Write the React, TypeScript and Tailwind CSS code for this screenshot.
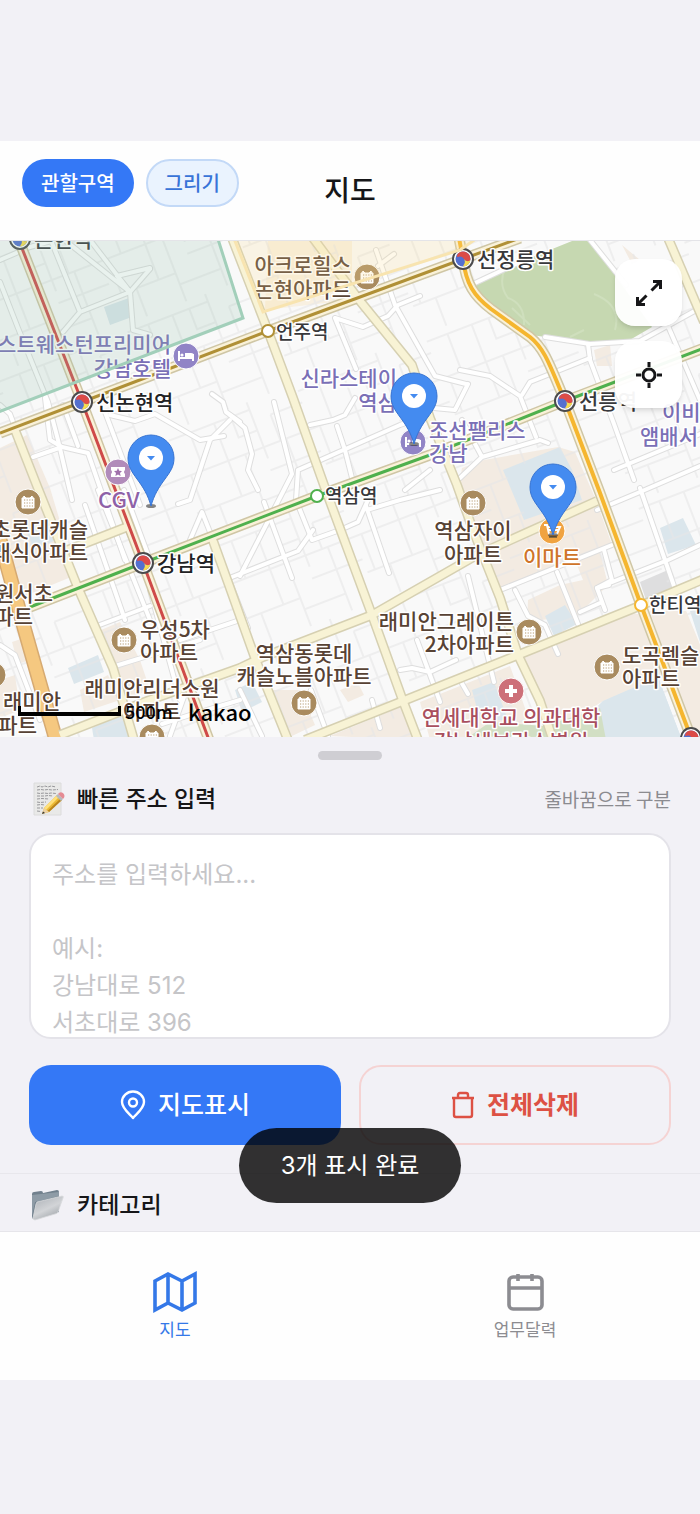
import React from "react";

type Point = [number, number];

const BROWN = "#574234";
const INK = "#38383b";
const PURPLE = "#7a6fb6";
const RED = "#a94f5e";

interface MapLabel {
  text: string;
  x: number;
  y: number;
  color: string;
  size?: number;
  anchor?: "start" | "middle" | "end";
}

const labels: MapLabel[] = [
  { text: "논현역", x: 34, y: 247, color: INK },
  { text: "아크로힐스", x: 351, y: 273, color: BROWN, anchor: "end" },
  { text: "논현아파트", x: 351, y: 297, color: BROWN, anchor: "end" },
  { text: "선정릉역", x: 477, y: 267, color: INK },
  { text: "언주역", x: 276, y: 339, color: INK, size: 19 },
  { text: "스트웨스턴프리미어", x: 171, y: 352, color: PURPLE, anchor: "end" },
  { text: "강남호텔", x: 171, y: 376, color: PURPLE, anchor: "end" },
  { text: "신논현역", x: 96, y: 410, color: "#222224" },
  { text: "신라스테이", x: 397, y: 386, color: PURPLE, anchor: "end" },
  { text: "역삼", x: 397, y: 410, color: PURPLE, anchor: "end" },
  { text: "조선팰리스", x: 429, y: 438, color: PURPLE },
  { text: "강남", x: 429, y: 461, color: PURPLE },
  { text: "선릉역", x: 579, y: 409, color: INK },
  { text: "이비", x: 662, y: 420, color: PURPLE },
  { text: "앰배서", x: 640, y: 444, color: PURPLE },
  { text: "CGV", x: 98, y: 508, color: "#8e62a8", size: 22 },
  { text: "역삼역", x: 325, y: 503, color: INK, size: 19 },
  { text: "역삼자이", x: 473, y: 538, color: BROWN, anchor: "middle" },
  { text: "아파트", x: 473, y: 562, color: BROWN, anchor: "middle" },
  { text: "이마트", x: 552, y: 565, color: "#cf7429", anchor: "middle" },
  { text: "초롯데캐슬", x: 88, y: 537, color: BROWN, anchor: "end" },
  { text: "래식아파트", x: 88, y: 560, color: BROWN, anchor: "end" },
  { text: "강남역", x: 157, y: 571, color: "#222224" },
  { text: "원서초", x: 53, y: 601, color: BROWN, anchor: "end" },
  { text: "파트", x: 33, y: 624, color: BROWN, anchor: "end" },
  { text: "우성5차", x: 140, y: 637, color: BROWN },
  { text: "아파트", x: 140, y: 660, color: BROWN },
  { text: "래미안리더스원", x: 152, y: 696, color: BROWN, anchor: "middle" },
  { text: "아파트", x: 152, y: 719, color: BROWN, anchor: "middle" },
  { text: "래미안", x: 61, y: 709, color: BROWN, anchor: "end" },
  { text: "파트", x: 37, y: 733, color: BROWN, anchor: "end" },
  { text: "역삼동롯데", x: 304, y: 661, color: BROWN, anchor: "middle" },
  { text: "캐슬노블아파트", x: 304, y: 684, color: BROWN, anchor: "middle" },
  { text: "래미안그레이튼", x: 514, y: 629, color: BROWN, anchor: "end" },
  { text: "2차아파트", x: 514, y: 652, color: BROWN, anchor: "end" },
  { text: "한티역", x: 649, y: 612, color: INK, size: 19 },
  { text: "도곡렉슬", x: 622, y: 663, color: BROWN },
  { text: "아파트", x: 622, y: 686, color: BROWN },
  { text: "연세대학교 의과대학", x: 511, y: 725, color: RED, anchor: "middle" },
  { text: "강남세브란스병원", x: 511, y: 749, color: RED, anchor: "middle" },
];

const lanes: string[] = [
  "M0 260 L30 247 L62 238 M0 282 L18 328 L48 402 L58 440 L72 500",
  "M50 238 L80 312 L63 332 M62 238 L130 292 L117 276 L150 268 M130 292 L80 312",
  "M90 240 L130 292 L133 330 L150 335 M130 292 L150 269",
  "M0 405 L10 414 L16 430 M45 398 L50 440 L62 447 L88 453 L125 560",
  "M33 457 L62 447 M63 405 L78 446 M110 415 L135 421 L155 414 L200 440 L224 436",
  "M105 412 L140 505 M212 394 L223 402 L226 412 L240 422",
  "M335 318 L363 327 L388 316 L398 305 L420 296 M376 250 L395 305 L435 376 L466 384 M335 318 L356 369",
  "M378 266 L394 254 M274 402 L292 474 L240 576 M310 425 L333 420 L345 415 L355 398",
  "M337 426 L345 450 L352 478 M298 470 L400 425 L414 420 M298 470 L296 500 L312 540 L340 530 L358 522 L368 500",
  "M313 530 L298 551 L232 577 M264 502 L292 578 M230 415 L245 428 L252 454 L248 470 L258 490",
  "M434 408 L455 410 L468 384 M462 420 L474 442 L482 457 L460 478 M482 457 L540 440 L548 443",
  "M460 370 L490 376 L520 396 L536 437 M522 395 L530 382 L590 358 M545 337 L590 344 L640 341 L700 308",
  "M588 344 L590 360 L614 424 L634 480 M590 240 L626 285 M668 326 L700 400 M700 434 L614 470 M475 283 L520 262",
  "M367 510 L400 500 L440 490 M366 506 L389 573 M405 490 L430 470",
  "M190 540 L202 512 L248 628 M85 505 L125 620 M98 490 L150 620 M124 490 L150 560",
  "M97 626 L150 606 M150 590 L180 700 M180 640 L240 620 M112 667 L200 640 M170 736 L190 680",
  "M0 645 L15 655 L40 720 M162 724 L190 715 L240 700 M240 690 L262 736",
  "M500 590 L612 545 M557 572 L578 624 M515 590 L528 616 L545 625 L558 654",
  "M468 576 L494 682 M640 488 L674 586 M597 588 L668 560 L700 545 M609 585 L597 588 L605 610 M580 612 L600 603",
  "M400 670 L412 668 L430 672 L456 660 M417 640 L440 702 M311 690 L328 736 M372 700 L380 728",
  "M460 680 L468 694 M604 550 L612 580 L597 588 M597 510 L640 492 L700 466",
  "M230 420 L210 440 L190 500 L178 504",
];

const yellowRoads: string[] = [
  "M232 238 L268 331 L293 398 L325 488 L372 615 L403 701 L418 740",
  "M313 238 L360 301 L412 365 L430 418 L457 485 L473 530 L500 598 L518 655 L540 701 L553 740",
  "M212 538 L230 588 L255 658 L288 740",
  "M15 430 L37 486 L78 588 L113 668 L134 740",
  "M60 735 L150 700 L240 668 L263 657 L372 615 L477 555 L597 501",
  "M305 740 L403 701 L518 655 L642 605 L704 579",
  "M60 553 L127 527",
  "M668 238 L704 322",
];

const subwayLines: { d: string; color: string; width: number }[] = [
  { d: "M0 433 L82 402 L268 331 L463 259 L520 238", color: "#b09036", width: 3 },
  { d: "M30 607 L143 563 L317 496 L430 455 L565 401 L704 348", color: "#4fb04d", width: 3 },
  { d: "M18 238 L82 402 L143 563 L209 740", color: "#cf4a48", width: 3 },
  {
    d: "M459 238 L463 259 C466 284 474 296 491 309 L530 337 C545 349 550 366 565 401 L600 493 L641 605 L692 740",
    color: "#f5b62f",
    width: 4,
  },
];

const apartments: Point[] = [
  [367, 277], [28, 502], [473, 503], [124, 640], [304, 703],
  [529, 632], [607, 667], [-7, 675], [152, 737],
];
const hotels: Point[] = [[186, 356], [413, 442]];
const interchanges: Point[] = [[20, 239], [82, 402], [143, 563], [463, 259], [565, 401], [691, 738]];
const stations: { at: Point; color: string }[] = [
  { at: [268, 331], color: "#b09036" },
  { at: [317, 496], color: "#4fb04d" },
  { at: [641, 605], color: "#f5b62f" },
];
const pins: Point[] = [[414, 396], [151, 458], [553, 487]];

function Interchange({ at: [x, y] }: { at: Point }) {
  return (
    <g transform={`translate(${x} ${y})`}>
      <circle r="10" fill="#fff" stroke="#4a4a4c" strokeWidth="2" />
      <circle r="7.5" fill="#5470cf" />
      <path d="M-4 -6.300 A7.500 7.500 0 0 1 7.500 0 C7 3 3 3 1 0 C-1 -3 -3 -3 -6 -2 Q-6 -5 -4 -6.300Z" fill="#dc4b47" />
      <path d="M7.500 0 A7.500 7.500 0 0 1 0 7.500 C1 5 3 4 1 0 C3 3 7 3 7.500 0Z" fill="#f7dc4f" />
    </g>
  );
}

function Apartment({ at: [x, y] }: { at: Point }) {
  return (
    <g transform={`translate(${x} ${y})`}>
      <circle r="13" fill="#a98b5f" stroke="#fff" />
      <path d="M-6 -4 H-5 L-4 -6 L-2 -4 H2 L4 -6 L5 -4 H6 V6 H-6Z" fill="#fff" stroke="#fff" strokeWidth="1" strokeLinejoin="round" />
      <path d="M-4 -2 H5 M-4 1 H5 M-4 4 H5" stroke="#b59a70" strokeWidth="1.2" strokeDasharray="1.2 1.400" />
    </g>
  );
}

function Hotel({ at: [x, y] }: { at: Point }) {
  return (
    <g transform={`translate(${x} ${y})`}>
      <circle r="13" fill="#9184c6" stroke="#fff" />
      <path d="M-7 -5 V5 M-7 2 H7 V5 M7 2 V-2" stroke="#fff" strokeWidth="2" fill="none" />
      <path d="M-1 -3 H5 Q8 -3 8 0 V2 H-1Z" fill="#fff" />
      <circle cx="-4" cy="-1" r="1.6" fill="#fff" />
    </g>
  );
}

function Pin({ at: [x, y] }: { at: Point }) {
  return (
    <g transform={`translate(${x} ${y})`}>
      <ellipse cy="48" rx="5" ry="2" fill="#333" opacity=".6" />
      <path
        d="M0 48 C-3 37 -8 29 -14 21 C-19 14 -23 9 -23 0 A23 23 0 0 1 23 0 C23 9 19 14 14 21 C8 29 3 37 0 48Z"
        fill="#448bf0"
        stroke="#3874d2"
      />
      <circle r="12" fill="#fff" />
      <path d="M-4 -2 H4 L0 2.5Z" fill="#448bf0" />
    </g>
  );
}

function CityMap() {
  return (
    <svg
      viewBox="0 241 700 496"
      preserveAspectRatio="xMidYMid slice"
      className="block h-full w-full"
      role="img"
      aria-label="강남 지도"
    >
      <defs>
        <pattern id="blocks" width="138" height="116" patternUnits="userSpaceOnUse" patternTransform="rotate(-21)">
          <path
            d="M0 8 H86 M86 0 V60 M22 8 V48 M48 8 V86 M0 48 H138 M66 48 V116 M104 20 V48 M104 20 H138 M0 86 H66 M24 86 V116 M84 72 H138 M110 48 V116 M66 98 H110 M8 48 V86 M66 8 V30 H86"
            fill="none"
            stroke="#e6e6e7"
            strokeWidth="2"
          />
        </pattern>
      </defs>
      <rect y="238" width="700" height="502" fill="#f9f9f9" />
      <g fill="#f3ebe2">
        <path d="M0 448 L27 435 L50 488 L76 575 L20 598 L0 560Z" />
        <path d="M101 630 L120 622 L140 660 L112 668Z M80 690 L108 675 L120 700 L84 712Z M112 670 L140 660 L150 690 L122 700Z" />
        <path d="M0 680 L15 675 L20 710 L0 718Z M12 642 L24 638 L30 660 L18 664Z" />
        <path d="M460 480 L462 468 L484 460 L558 447 L575 452 L596 500 L612 545 L500 590 L484 548Z" />
        <path d="M528 600 L560 585 L583 580 L575 560 L600 552 L608 585 L578 615 L527 622Z" />
        <path d="M523 658 L633 613 L644 616 L664 675 L603 701 L553 730Z" />
        <path d="M650 611 L686 611 L700 645 V740 H694Z" />
        <path d="M270 690 L300 690 L315 725 L292 736Z M340 690 L358 683 L364 695 L348 702Z M330 736 L403 706 L418 740Z" />
        <path d="M420 702 L510 666 L535 736 L430 740Z M594 350 L610 345 L612 366 L597 366Z M622 245 L640 260 L632 264Z" />
        <path d="M268 240 H352 V300 L265 310Z" fill="#f8f0e1" />
      </g>
      <g fill="#dbe6ec">
        <path d="M503 470 L560 447 L572 470 L582 500 L524 520Z M660 528 L683 518 L696 545 L668 554Z M545 616 L565 605 L577 624 L554 636Z" />
        <path d="M603 701 L658 677 L682 740 H565Z M690 611 L700 608 V642Z M472 690 L494 682 L508 720 L480 720Z" />
        <path d="M68 668 L98 655 L104 672 L74 684Z M92 728 L123 714 L133 740 H94Z M235 690 L252 682 L262 702 L242 712Z M26 530 L48 522 L56 540 L34 550Z" />
        <path d="M104 307 L129 298 L129 318 L110 325Z" />
      </g>
      <path d="M640 582 L668 570 L674 588 L646 600Z" fill="#dededf" />
      <rect y="238" width="700" height="502" fill="url(#blocks)" opacity=".6" />
      <path d="M523 658 L633 613 L644 616 L664 675 L603 701 L553 730Z M650 611 L686 611 L700 645 V740 H694Z" fill="#f3ebe2" />
      <path d="M603 701 L658 677 L682 740 H565Z M505 472 L560 449 L572 470 L580 498 L526 516Z" fill="#dbe6ec" />
      <path d="M470 736 L490 722 L545 726 L600 708 L606 740Z" fill="#d2dfc4" />
      <path
        d="M475 284 L520 262 L577 239 H590 L620 282 L652 327 L628 341 L590 343 L531 335 L488 306Z"
        fill="#c6d8b1"
      />
      <path
        d="M505 268 Q498 285 508 298 Q525 304 524 325 M512 308 L530 325 M570 337 L584 330 M594 294 Q622 305 615 330"
        fill="none"
        stroke="#cfdfbd"
        strokeWidth="2"
      />
      <g fill="none" strokeLinejoin="round" strokeLinecap="round">
        {lanes.map((d) => <path key={d} d={d} stroke="#dedede" strokeWidth="6" />)}
        {lanes.map((d) => <path key={d} d={d} stroke="#fff" strokeWidth="4" />)}
      </g>
      <g fill="none" strokeLinejoin="round">
        <path d="M0 540 L25 631 L56 740" stroke="#d6aa72" strokeWidth="15" />
        <path d="M0 540 L25 631 L56 740" stroke="#f5c880" strokeWidth="12" />
        {yellowRoads.map((d) => <path key={d} d={d} stroke="#d6d0b2" strokeWidth="10" />)}
        {subwayLines.map((l) => <path key={l.d} d={l.d} stroke="#cfc6a5" strokeWidth="11" />)}
        {yellowRoads.map((d) => <path key={d} d={d} stroke="#f8f3d5" strokeWidth="7" />)}
        {subwayLines.map((l) => <path key={l.d} d={l.d} stroke="#faf2d9" strokeWidth="8" />)}
        {subwayLines.map((l) => <path key={l.d} d={l.d} stroke={l.color} strokeWidth={l.width} />)}
      </g>
      {apartments.map((at) => <Apartment key={at.join()} at={at} />)}
      {hotels.map((at) => <Hotel key={at.join()} at={at} />)}
      <g transform="translate(118 472)">
        <circle r="13" fill="#b18bba" stroke="#fff" />
        <path d="M-7 -5 H7 V-2 Q5 0 7 2 V5 H-7 V2 Q-5 0 -7 -2Z" fill="#fff" />
        <path d="M0 -4 L1.2 -1.2 L4 -1 L2 1 L2.6 4 L0 2.4 L-2.6 4 L-2 1 L-4 -1 L-1.2 -1.2Z" fill="#a070ab" />
      </g>
      <g transform="translate(511 691)">
        <circle r="13" fill="#cd7079" stroke="#fff" />
        <path d="M0 -6 V6 M-6 0 H6" stroke="#fff" strokeWidth="4" />
      </g>
      <g transform="translate(552 531)">
        <circle r="13" fill="#f0a341" stroke="#fff" />
        <path d="M-8 -6 H-5 L-3 3 H5 L8 -4 H-4 M-4 -1 H6" stroke="#fff" strokeWidth="2" fill="none" />
        <path d="M-3 6 H5" stroke="#8a6a3a" strokeWidth="2" />
      </g>
      {stations.map(({ at: [x, y], color }) => (
        <circle key={color} cx={x} cy={y} r="6" fill="#fff" stroke={color} strokeWidth="2" />
      ))}
      {interchanges.map((at) => <Interchange key={at.join()} at={at} />)}
      <g stroke="#fff" strokeWidth="3" strokeLinejoin="round" className="font-medium [paint-order:stroke]">
        {labels.map((l) => (
          <text key={`${l.text}${l.x}${l.y}`} x={l.x} y={l.y} fill={l.color} fontSize={l.size ?? 21} textAnchor={l.anchor ?? "start"}>
            {l.text}
          </text>
        ))}
      </g>
      <path d="M-4 236 H217 L243 318 L-4 413Z" fill="#8fbda8" fillOpacity=".2" stroke="#a2cfba" strokeWidth="3" />
      <path d="M233 236 L263 312 L460 250 L480 236Z" fill="#f9dc92" fillOpacity=".2" stroke="#f8e4b0" strokeWidth="3" />
      {pins.map((at) => <Pin key={at.join()} at={at} />)}
    </svg>
  );
}

function MemoIcon() {
  return (
    <svg viewBox="0 0 34 36" className="h-9 w-[34px]" aria-hidden="true">
      <path d="M2 2 H29 V34 H2Z" fill="#e9e9e8" stroke="#dcdcdc" />
      <path
        d="M5 6 l3 -1 2 1 3 -1 3 1 3 -1 5 1 M5 9 l4 -.5 3 .5 4 -.5 4 .5 6 -.5 M5 12 l3 .5 4 -.5 4 .5 3 -.5 5 .5 M5 15 h8 l3 -.5 5 .5 M5 18 l5 -.5 7 .5 M5 21 l3 .5 6 -.5 M5 24 l4 -.5 4 .5 M5 27 h6 M5 30 l4 .5"
        fill="none"
        stroke="#97979a"
        strokeWidth="1"
        strokeDasharray="3 1"
      />
      <path d="M10 33 L12 27 L25 14 L30 19 L17 31Z" fill="#eab934" />
      <path d="M12 27 L25 14 L27 16 L14 29Z" fill="#ffe07a" />
      <path d="M17 31 L30 19 L28.5 17.5 L15.5 30Z" fill="#b9841e" />
      <path d="M10 33 L12 27 L17 31Z" fill="#ecd1a4" />
      <path d="M10 33 L11 30.5 L13 32Z" fill="#333" />
      <path d="M24 15 L26 13 L31 18 L29 20Z" fill="#b5b9bd" />
      <path d="M26 13 Q28 10 31 12 Q34 15 31 18Z" fill="#e58b94" />
    </svg>
  );
}

function FolderIcon() {
  return (
    <svg viewBox="0 0 34 34" className="h-[34px] w-[34px]" aria-hidden="true">
      <defs>
        <linearGradient id="folderFront" x1="0" y1="0" x2=".6" y2="1">
          <stop offset="0" stopColor="#a9aeb4" />
          <stop offset=".6" stopColor="#d2d4d7" />
          <stop offset="1" stopColor="#a2a7ac" />
        </linearGradient>
      </defs>
      <path d="M2 6 Q2 4 4 4 L11 3 Q13 3 13 5 L27 2 Q29 2 29 4 V24 L4 31 Q2 31 2 29Z" fill="#71808d" />
      <path d="M2 7 L29 4 V8 L5 14 L2 28Z" fill="#8e9ba6" />
      <path d="M7 14 L32 8 Q34 8 33 10 L28 24 Q27 26 25 26 L5 32 Q3 32 3 30 L6 16Z" fill="url(#folderFront)" stroke="#d9dbdd" strokeWidth=".8" />
    </svg>
  );
}

export default function App() {
  return (
    <div className="flex min-h-screen flex-col bg-[#f2f1f6] pt-[141px] font-['Inter','Noto_Sans_CJK_KR',sans-serif] text-[#161618]">
      <header className="grid h-[100px] grid-cols-[1fr_auto_1fr] items-start border-b border-[#e4e4e8] bg-[#fefefe] px-[22px] pt-[18px]">
        <div className="flex gap-3">
          <button type="button" className="h-12 rounded-full bg-[#3478f6] px-[19px] pt-0.5 text-[20px] leading-[30px] font-medium whitespace-nowrap text-white">
            관할구역
          </button>
          <button type="button" className="h-12 rounded-full border-2 border-[#c3d9f7] bg-[#eaf3fe] px-[17px] pt-0.5 text-[20px] leading-[30px] font-medium whitespace-nowrap text-[#3874d8]">
            그리기
          </button>
        </div>
        <h1 className="pt-[11px] text-[28px] leading-[42px] font-medium">지도</h1>
      </header>

      <main className="flex flex-col">
        <section className="relative h-[496px] overflow-hidden font-['Noto_Sans_CJK_KR',sans-serif]">
          <CityMap />
          <div className="absolute top-[18px] right-[18px] flex flex-col gap-[15px]">
            <button type="button" aria-label="전체 화면" className="grid size-[67px] place-items-center rounded-[20px] bg-white/95 shadow-md shadow-black/10">
              <svg viewBox="0 0 28 28" className="size-7" fill="none" stroke="#161618" strokeWidth="3">
                <path d="M16.5 11.500 L26 2 M18 2.500 H25.500 V10 M11.500 16.500 L2 26 M2.500 18 V25.500 H10" />
              </svg>
            </button>
            <button type="button" aria-label="현재 위치" className="grid size-[67px] place-items-center rounded-[20px] bg-white/95 shadow-md shadow-black/10">
              <svg viewBox="0 0 28 28" className="size-7" fill="none" stroke="#161618" strokeWidth="3">
                <circle cx="14" cy="14" r="6" />
                <path d="M14 1 V6 M14 22 V27 M1 14 H6 M22 14 H27" />
              </svg>
            </button>
          </div>
          <div className="absolute bottom-2 left-[18px] flex items-center text-black">
            <span className="mr-1 h-[10px] w-[103px] border-x-[3px] border-b-4 border-black" />
            <span className="w-[63px] text-[18px] leading-9 font-medium">500m</span>
            <span className="text-[22px] leading-9 font-medium">kakao</span>
          </div>
        </section>

        <section className="relative flex flex-col px-[29px] pt-[14px]">
          <span className="h-[9px] w-16 self-center rounded-full bg-[#cfced3]" />
          <div className="mt-[21px] flex h-9 items-center">
            <span className="ml-[3px] flex w-[45px]"><MemoIcon /></span>
            <label htmlFor="addresses" className="text-[23px] leading-9 font-medium">빠른 주소 입력</label>
            <span className="ml-auto font-['Noto_Sans_CJK_KR',sans-serif] text-[19px] leading-9 text-[#8b8b90]">줄바꿈으로 구분</span>
          </div>
          <textarea
            id="addresses"
            className="mt-4 block h-[206px] w-full resize-none overflow-hidden rounded-[22px] border-2 border-[#e4e3e9] bg-white px-[21px] pt-[21px] text-[24px] leading-[37px] outline-none placeholder:text-[#c5c5c8]"
            placeholder={"주소를 입력하세요...\n\n예시:\n강남대로 512\n서초대로 396"}
          />
          <div className="mt-[26px] grid grid-cols-2 gap-[18px]">
            <button type="button" className="flex h-20 items-center justify-center gap-3 rounded-[22px] bg-[#3478f6] text-[25px] leading-9 font-medium text-white">
              <svg viewBox="0 0 26 30" className="h-[30px] w-[26px]" fill="none" stroke="currentColor" strokeWidth="2.4" strokeLinejoin="round">
                <path d="M13 28 C11 25 2 19 2 12 A11 10.5 0 0 1 24 12 C24 19 15 25 13 28Z" />
                <circle cx="13" cy="12.5" r="4" />
              </svg>
              지도표시
            </button>
            <button type="button" className="flex h-20 items-center justify-center gap-3 rounded-[22px] border-2 border-[#f5d3d3] text-[25px] leading-9 font-bold text-[#dd5144]">
              <svg viewBox="0 0 24 30" className="h-[30px] w-6" fill="none" stroke="currentColor" strokeWidth="2.4" strokeLinejoin="round">
                <path d="M1 8 H23 M7 8 V5 Q7 3 9 3 H15 Q17 3 17 5 V8 M3 8 V25 Q3 27 5 27 H19 Q21 27 21 25 V8" />
              </svg>
              전체삭제
            </button>
          </div>
          <div className="-mx-[29px] mt-7 flex h-[58px] items-center border-t border-[#e8e7ec] px-[29px] pt-1">
            <span className="ml-px flex w-[47px]"><FolderIcon /></span>
            <h2 className="text-[23px] leading-9 font-medium">카테고리</h2>
          </div>
          <div role="status" className="absolute bottom-7 left-1/2 flex h-[75px] w-[222px] -translate-x-1/2 items-center justify-center rounded-full bg-black/80 text-[24px] leading-9 whitespace-nowrap text-white">
            3개 표시 완료
          </div>
        </section>
      </main>

      <nav className="grid h-[149px] grid-cols-2 border-t border-[#e6e5ea] bg-[#fefefe] pt-[38px]">
        <a href="#map" className="flex flex-col items-center gap-1 text-[17px] leading-6 text-[#3478e8]">
          <svg viewBox="0 0 46 44" className="h-11 w-[46px]" fill="none" stroke="currentColor" strokeWidth="3.6">
            <path d="M3 11 L16 4 L30 11 L43 4 V33 L30 40 L16 33 L3 40Z M16 4 V33 M30 11 V40" />
          </svg>
          지도
        </a>
        <a href="#calendar" className="flex flex-col items-center gap-1 text-[17px] leading-6 text-[#8c8c91]">
          <svg viewBox="0 0 46 44" className="h-11 w-[46px]" fill="none" stroke="currentColor" strokeWidth="3.6">
            <rect x="7" y="7" width="33" height="32" rx="4" />
            <path d="M7 18 H40 M16 4 V11 M30 4 V11" />
          </svg>
          업무달력
        </a>
      </nav>
    </div>
  );
}
